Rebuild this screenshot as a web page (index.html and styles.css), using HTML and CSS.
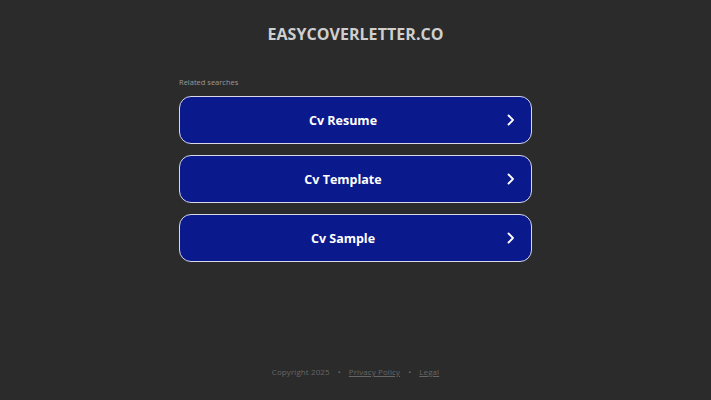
FILE: index.html
```html
<!DOCTYPE html>
<html>
<head>
<meta charset="utf-8">
<link rel="stylesheet" href="styles.css">
</head>
<body>
<div class="page">
  <header class="header"><h1 class="title">EASYCOVERLETTER.CO</h1></header>
  <main class="main">
    <div class="related">Related searches</div>
    <div class="list">
      <a class="item" href="#"><span class="label">Cv Resume</span><span class="chev-box"><svg class="chev" viewBox="0 0 8 12" width="8" height="12"><path d="M1.5 1.5 L6 6 L1.5 10.5" fill="none" stroke="#fff" stroke-width="1.8" stroke-linecap="round" stroke-linejoin="round"/></svg></span></a>
      <a class="item" href="#"><span class="label">Cv Template</span><span class="chev-box"><svg class="chev" viewBox="0 0 8 12" width="8" height="12"><path d="M1.5 1.5 L6 6 L1.5 10.5" fill="none" stroke="#fff" stroke-width="1.8" stroke-linecap="round" stroke-linejoin="round"/></svg></span></a>
      <a class="item" href="#"><span class="label">Cv Sample</span><span class="chev-box"><svg class="chev" viewBox="0 0 8 12" width="8" height="12"><path d="M1.5 1.5 L6 6 L1.5 10.5" fill="none" stroke="#fff" stroke-width="1.8" stroke-linecap="round" stroke-linejoin="round"/></svg></span></a>
    </div>
  </main>
  <footer class="footer">
    <span>Copyright 2025</span><span class="dot">•</span><a href="#">Privacy Policy</a><span class="dot">•</span><a href="#">Legal</a>
  </footer>
</div>
</body>
</html>
```
FILE: styles.css
```css
html, body {
  margin: 0;
  padding: 0;
  background: #2b2b2b;
  font-family: "Open Sans", "Noto Sans", sans-serif;
}
.page {
  height: 400px;
  display: flex;
  flex-direction: column;
  align-items: center;
}
.header {
  padding-top: 23px;
}
.title {
  margin: 0;
  font-size: 16px;
  font-weight: 700;
  letter-spacing: 0.05px;
  color: #cfcfcf;
  line-height: 22px;
}
.main {
  width: 353px;
  margin-top: 31px;
}
.related {
  font-size: 7.5px;
  color: #9a9a9a;
  line-height: 12px;
  margin-bottom: 8px;
}
.list {
  display: flex;
  flex-direction: column;
  gap: 11px;
}
.item {
  display: flex;
  align-items: center;
  height: 46px;
  padding: 0 16px;
  border: 1px solid #d8d8e8;
  border-radius: 12px;
  background: #0a1a8c;
  text-decoration: none;
}
.label {
  flex: 1;
  text-align: center;
  color: #fff;
  font-size: 12.5px;
  font-weight: 700;
}
.chev-box {
  width: 25px;
  display: flex;
  justify-content: flex-end;
}
.chev {
  display: block;
}
.footer {
  margin-top: auto;
  padding-bottom: 23px;
  font-size: 8px;
  color: #666;
  display: flex;
  gap: 8px;
  letter-spacing: 0.1px;
}
.footer a {
  color: #666;
}
```
